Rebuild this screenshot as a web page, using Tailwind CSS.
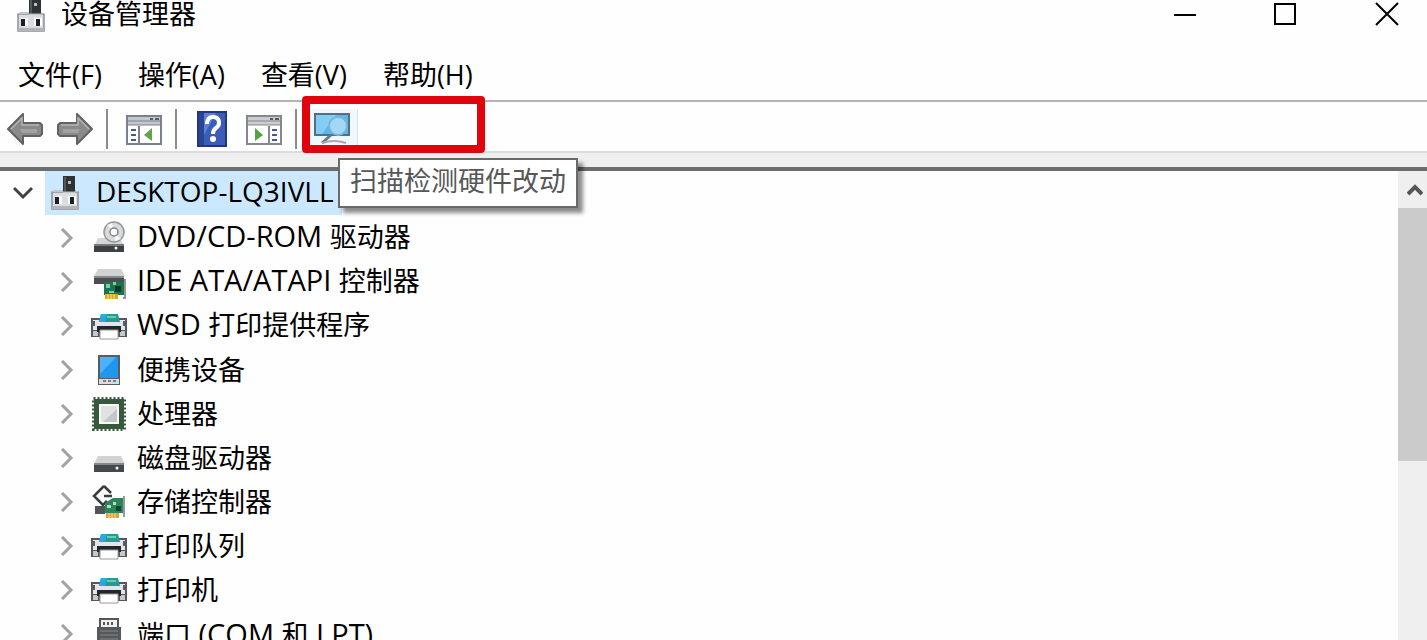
<!DOCTYPE html>
<html lang="zh-CN">
  <head>
    <meta charset="UTF-8" />
    <meta name="viewport" content="width=device-width, initial-scale=1.0" />
    <title>设备管理器</title>
    <script src="https://cdn.jsdelivr.net/npm/@tailwindcss/browser@4"></script>
  </head>
  <body class="h-screen overflow-hidden bg-[#fefefe] text-black font-['Open_Sans','Noto_Sans_CJK_SC',sans-serif] text-[27px] leading-7">
    <!-- Shared icons -->
    <svg class="hidden">
      <symbol id="computer" viewBox="0 0 30 34">
        <rect x="13" y="0" width="12" height="17" fill="#2f3133" />
        <rect x="14" y="1" width="2" height="15" fill="#55585a" />
        <rect x="18" y="5" width="3" height="3" fill="#b9bcbe" />
        <path d="M2 16h26v17H2z" fill="#dcdde1" stroke="#8e8f95" stroke-width="1.5" />
        <path d="M1 16l3-2h9v3h12v-3l4 2" fill="#c5c6ca" />
        <path d="M2 30h26v3H2z" fill="#b3b4ba" />
        <rect x="5" y="20" width="7" height="8" fill="#fff" />
        <rect x="18" y="20" width="8" height="8" fill="#fff" />
        <rect x="5" y="21" width="4" height="7" fill="#1d1f24" />
        <rect x="20" y="21" width="4" height="7" fill="#1d1f24" />
      </symbol>
      <symbol id="optical" viewBox="0 0 36 36">
        <path d="M7 18h22l4 8H3z" fill="#d5d7d8" />
        <circle cx="23" cy="12" r="10" fill="#d9dadb" stroke="#939596" stroke-width="1.5" />
        <path d="M23 12l-7-7 5-2zM23 12l7 7-6 2z" fill="#f5f5f5" />
        <circle cx="23" cy="12" r="4" fill="#fff" stroke="#808283" stroke-width="1.5" />
        <rect x="3" y="24" width="30" height="8" fill="#3d4143" />
        <path d="M3 24h30v2H3z" fill="#777b7d" />
        <circle cx="25" cy="28" r="1.5" fill="#e8fff0" />
      </symbol>
      <symbol id="ide" viewBox="0 0 36 36">
        <path d="M7 5h23l4 7H3z" fill="#d0d2d3" />
        <rect x="3" y="12" width="30" height="8" fill="#4a4e50" />
        <path d="M3 12h30v2H3z" fill="#85898b" />
        <path d="M13 18h20v13H13z" fill="#17764a" />
        <path d="M15 20h4v4h-4zM22 18h3v3h-3zM18 27h5v2h-5z" fill="#8bc7a0" />
        <path d="M24 22h6v6h-6z" fill="#0a3b27" />
        <path d="M34 15v19h-2" fill="none" stroke="#777" stroke-width="1.5" />
        <path d="M14 30h13v5H14z" fill="#d9a625" />
        <path d="M17 30v5M20 30v5M23 30v5" stroke="#f7e18b" />
      </symbol>
      <symbol id="printer" viewBox="0 0 36 36">
        <path d="M0 10h36v19H0z" fill="#54575b" />
        <path d="M2 12h32v10H2z" fill="#e3e5e8" />
        <path d="M1 13h3v5H1zM32 13h3v5h-3z" fill="#5b5d61" />
        <path d="M2 23h5v5H2zM29 23h5v5h-5z" fill="#c6c8ca" />
        <path d="M10 6h17l2 8H8z" fill="#269b96" />
        <path d="M10 6h6l-2 8H8z" fill="#2da8df" />
        <path d="M16 8h9v2h-9z" fill="#69cdb0" />
        <path d="M6 18h24v6H6z" fill="#24272a" />
        <path d="M9 22h18v9H9z" fill="#fff" stroke="#999" />
      </symbol>
      <symbol id="portable" viewBox="0 0 36 36">
        <rect x="7" y="3" width="22" height="30" fill="#5a5d60" />
        <rect x="9" y="5" width="18" height="21" fill="#2196ed" />
        <path d="M9 5h16L9 22z" fill="#4db2fa" />
        <rect x="8" y="27" width="20" height="5" fill="#d9dcde" />
        <path d="M12 29h3M17 29h3M22 29h3" stroke="#7c8083" stroke-width="2" />
      </symbol>
      <symbol id="cpu" viewBox="0 0 36 36">
        <rect x="2.5" y="2.5" width="31" height="31" fill="none" stroke="#37583d" stroke-width="3" stroke-dasharray="2 2" />
        <rect x="3" y="3" width="30" height="30" fill="#37583d" />
        <rect x="9" y="9" width="18" height="18" fill="#dfe2e1" stroke="#f7f8f7" stroke-width="2" />
        <path d="M26 13v13H12z" fill="#c3c8c6" />
      </symbol>
      <symbol id="disk" viewBox="0 0 36 36">
        <path d="M7 16h23l4 8H3z" fill="#d0d2d3" />
        <rect x="3" y="23" width="30" height="9" fill="#45494b" />
        <path d="M3 23h30v2H3z" fill="#84888a" />
        <circle cx="26" cy="28" r="1.5" fill="#eafff2" />
      </symbol>
      <symbol id="storage" viewBox="0 0 36 36">
        <path d="M4 22h10v8H4z" fill="#505456" />
        <path d="M13 2L3 12l9 9 4-4M13 2l7 7M13 12h8" fill="none" stroke="#3a3c3d" stroke-width="2.5" />
        <path d="M14 19l8-5h10v15H14z" fill="#2b855b" />
        <path d="M22 18h3v3h-3zM16 21h4v3h-4z" fill="#b4dcbe" />
        <path d="M25 22h5v5h-5z" fill="#0d4630" />
        <path d="M33 12v21" stroke="#777" stroke-width="1.5" />
        <path d="M15 29h13v5H15z" fill="#d9a625" />
        <path d="M18 29v5M21 29v5M24 29v5" stroke="#f7e18b" />
      </symbol>
      <symbol id="port" viewBox="0 0 36 36">
        <path d="M9 11V3h18v8" fill="#f1f1f1" stroke="#555" stroke-width="2" />
        <path d="M13 6v3M17 6v3M21 6v3" stroke="#555" stroke-width="2" />
        <path d="M6 11h24v18l-4 5H10l-4-5z" fill="#56595b" />
        <path d="M9 15h18M9 19h18M9 23h18" stroke="#85898b" />
      </symbol>
      <symbol id="chevron" viewBox="0 0 14 20">
        <path d="M2 1l9 9-9 9" fill="none" stroke="#a2a2a2" stroke-width="3" />
      </symbol>
      <symbol id="arrow" viewBox="0 0 36 34">
        <path d="M1 17L16 2v9h17l2 2v9l-2 2H16v8z" fill="#8a8a8a" stroke="#626262" stroke-width="2" stroke-linejoin="round" />
        <path d="M4 17L15 6v7h17" fill="none" stroke="#b4b4b4" stroke-width="1.5" />
        <path d="M13 17h17v4H15z" fill="#a2a2a2" />
      </symbol>
    </svg>

    <div class="flex h-full flex-col">
      <!-- Title bar -->
      <header class="flex h-[30px] shrink-0 items-center pl-4">
        <svg class="h-[34px] w-[30px] shrink-0"><use href="#computer" /></svg>
        <h1 class="ml-[15px] flex-1 pb-0.5">设备管理器</h1>
        <div class="-mr-2 flex">
          <button class="flex w-[100px] justify-center" aria-label="最小化">
            <svg class="h-7 w-6" viewBox="0 0 24 28"><path d="M1 14h22" stroke="#000" stroke-width="2" /></svg>
          </button>
          <button class="flex w-[100px] justify-center" aria-label="最大化">
            <svg class="h-7 w-6" viewBox="0 0 24 28"><path d="M2 3h20v20H2z" fill="none" stroke="#000" stroke-width="2" /></svg>
          </button>
          <button class="flex w-[100px] justify-center pl-1" aria-label="关闭">
            <svg class="h-7 w-6" viewBox="0 0 24 28"><path d="M1 2l22 22M23 2L1 24" stroke="#000" stroke-width="2" /></svg>
          </button>
        </div>
      </header>

      <!-- Menu -->
      <nav class="flex h-[70px] shrink-0 items-center gap-9 pt-5 pl-[18px]">
        <button>文件(F)</button>
        <button>操作(A)</button>
        <button>查看(V)</button>
        <button>帮助(H)</button>
      </nav>

      <!-- Toolbar -->
      <div class="relative flex h-[51px] shrink-0 items-center border-t-2 border-[#b4b4b4] pt-1 pl-[7px]">
        <button aria-label="后退"><svg class="h-[34px] w-9"><use href="#arrow" /></svg></button>
        <button class="ml-[14px]" aria-label="前进"><svg class="h-[34px] w-9 -scale-x-100"><use href="#arrow" /></svg></button>
        <span class="ml-[13px] h-10 w-0.5 bg-[#8c8c8c]"></span>
        <button class="ml-[18px]" aria-label="显示/隐藏控制台树">
          <svg class="h-[34px] w-9" viewBox="0 0 36 34">
            <rect x="1" y="4" width="34" height="28" fill="#fff" stroke="#7b808c" stroke-width="2" />
            <path d="M2 5h32v8H2z" fill="#c3c7cf" />
            <path d="M2 9h32M2 13h32" stroke="#7b808c" />
            <path d="M24 7h3M29 7h4" stroke="#555b68" stroke-width="2" />
            <path d="M13 14v17" stroke="#7b808c" stroke-width="2" />
            <path d="M5 18h5M5 23h5M5 28h5" stroke="#4a5a86" stroke-width="2" />
            <path d="M26 16v13l-8-6z" fill="#5fa548" />
          </svg>
        </button>
        <span class="ml-[13px] h-10 w-0.5 bg-[#8c8c8c]"></span>
        <button class="ml-5" aria-label="帮助">
          <svg class="h-9 w-[30px]" viewBox="0 0 30 36">
            <rect x="1" y="1" width="28" height="34" fill="#3c5cb8" stroke="#22377f" stroke-width="2" />
            <path d="M2 2h5v32H2z" fill="#2a4593" />
            <path d="M7 2h12L7 24z" fill="#5f80d3" />
            <path d="M10 13q0-7 6-7t6 6q0 3-3 5t-3 6" fill="none" stroke="#fff" stroke-width="4" />
            <circle cx="16" cy="28" r="3" fill="#fff" />
          </svg>
        </button>
        <button class="ml-[19px]" aria-label="显示/隐藏操作窗格">
          <svg class="h-[34px] w-9" viewBox="0 0 36 34">
            <rect x="1" y="4" width="34" height="28" fill="#fff" stroke="#85878b" stroke-width="2" />
            <path d="M2 5h32v8H2z" fill="#cbccd0" />
            <path d="M2 9h32M2 13h32" stroke="#85878b" />
            <path d="M24 7h3M29 7h4" stroke="#55585f" stroke-width="2" />
            <path d="M23 14v17" stroke="#85878b" stroke-width="2" />
            <path d="M26 18h5M26 23h5M26 28h5" stroke="#4a5a86" stroke-width="2" />
            <path d="M9 16v13l8-6z" fill="#4fa443" />
          </svg>
        </button>
        <span class="ml-[13px] h-10 w-0.5 bg-[#8c8c8c]"></span>
        <button class="ml-[7px] h-10 w-[54px] border-r border-[#cfe6f6] bg-[#eef8fd] pl-[9px]" aria-label="扫描检测硬件改动">
          <svg class="h-9 w-[38px]" viewBox="0 0 38 36">
            <path d="M2 3h34v21H2z" fill="#5db5ea" stroke="#4d7185" stroke-width="2" />
            <path d="M3 4h20L9 23H3z" fill="#85cbf4" />
            <path d="M18 24l-9 8" stroke="#5b7f92" stroke-width="3" />
            <circle cx="25" cy="15" r="9" fill="#a3d7f5" stroke="#77b6da" stroke-width="2" />
            <path d="M9 32q12-4 24 0" fill="none" stroke="#b3a5ad" stroke-width="2" />
          </svg>
        </button>
        <span class="absolute -top-1.5 left-[302px] h-[57px] w-[183px] rounded-sm border-8 border-[#e2040c]"></span>
        <div role="tooltip" class="absolute top-14 left-[338px] z-10 border-2 border-[#696969] bg-white px-2.5 pt-[7px] pb-[11px] whitespace-nowrap text-[#575757] shadow-[5px_5px_4px_rgba(0,0,0,0.45)]">扫描检测硬件改动</div>
      </div>
      <div class="h-5 shrink-0 border-t-2 border-b-4 border-t-[#dcdcdc] border-b-[#6c6c6c] bg-[#efefef]"></div>

      <!-- Device tree -->
      <main class="flex min-h-0 flex-1">
        <div class="min-w-0 flex-1 overflow-hidden">
          <div class="flex h-11 items-center">
            <button class="flex w-[45px] justify-center" aria-label="折叠">
              <svg class="h-3.5 w-5" viewBox="0 0 20 14"><path d="M1 2l9 9 9-9" fill="none" stroke="#404040" stroke-width="3" /></svg>
            </button>
            <div class="flex h-full items-center bg-[#cce8ff] pr-2 pl-[5px]">
              <svg class="h-[34px] w-[30px]"><use href="#computer" /></svg>
              <span class="ml-4 pb-1 text-[28px]">DESKTOP-LQ3IVLL</span>
            </div>
          </div>
          <ul class="mt-px pl-[60px]">
            <li class="flex h-11 items-center"><button aria-label="展开"><svg class="h-5 w-3.5"><use href="#chevron" /></svg></button><svg class="mr-2.5 ml-[17px] size-9"><use href="#optical" /></svg><p class="pb-1"><span class="text-[29px]">DVD/CD-ROM </span>驱动器</p></li>
            <li class="flex h-11 items-center"><button aria-label="展开"><svg class="h-5 w-3.5"><use href="#chevron" /></svg></button><svg class="mr-2.5 ml-[17px] size-9"><use href="#ide" /></svg><p class="pb-1"><span class="text-[29px]">IDE ATA/ATAPI </span>控制器</p></li>
            <li class="flex h-11 items-center"><button aria-label="展开"><svg class="h-5 w-3.5"><use href="#chevron" /></svg></button><svg class="mr-2.5 ml-[17px] size-9"><use href="#printer" /></svg><p class="pb-1"><span class="text-[29px]">WSD </span>打印提供程序</p></li>
            <li class="flex h-11 items-center"><button aria-label="展开"><svg class="h-5 w-3.5"><use href="#chevron" /></svg></button><svg class="mr-2.5 ml-[17px] size-9"><use href="#portable" /></svg><p>便携设备</p></li>
            <li class="flex h-11 items-center"><button aria-label="展开"><svg class="h-5 w-3.5"><use href="#chevron" /></svg></button><svg class="mr-2.5 ml-[17px] size-9"><use href="#cpu" /></svg><p>处理器</p></li>
            <li class="flex h-11 items-center"><button aria-label="展开"><svg class="h-5 w-3.5"><use href="#chevron" /></svg></button><svg class="mr-2.5 ml-[17px] size-9"><use href="#disk" /></svg><p>磁盘驱动器</p></li>
            <li class="flex h-11 items-center"><button aria-label="展开"><svg class="h-5 w-3.5"><use href="#chevron" /></svg></button><svg class="mr-2.5 ml-[17px] size-9"><use href="#storage" /></svg><p>存储控制器</p></li>
            <li class="flex h-11 items-center"><button aria-label="展开"><svg class="h-5 w-3.5"><use href="#chevron" /></svg></button><svg class="mr-2.5 ml-[17px] size-9"><use href="#printer" /></svg><p>打印队列</p></li>
            <li class="flex h-11 items-center"><button aria-label="展开"><svg class="h-5 w-3.5"><use href="#chevron" /></svg></button><svg class="mr-2.5 ml-[17px] size-9"><use href="#printer" /></svg><p>打印机</p></li>
            <li class="flex h-11 items-center"><button aria-label="展开"><svg class="h-5 w-3.5"><use href="#chevron" /></svg></button><svg class="mr-2.5 ml-[17px] size-9"><use href="#port" /></svg><p>端口<span class="text-[29px]"> (COM </span>和<span class="text-[29px]"> LPT)</span></p></li>
          </ul>
        </div>

        <!-- Scrollbar -->
        <div class="flex w-[29px] shrink-0 flex-col bg-[#efefef]">
          <button class="flex h-[37px] shrink-0 items-center justify-center pl-1" aria-label="向上滚动">
            <svg class="h-3.5 w-4" viewBox="0 0 16 14"><path d="M1 11l7-7 7 7" fill="none" stroke="#555" stroke-width="4" /></svg>
          </button>
          <div class="h-[54%] bg-[#cbcbcb]"></div>
        </div>
      </main>
    </div>
  </body>
</html>
